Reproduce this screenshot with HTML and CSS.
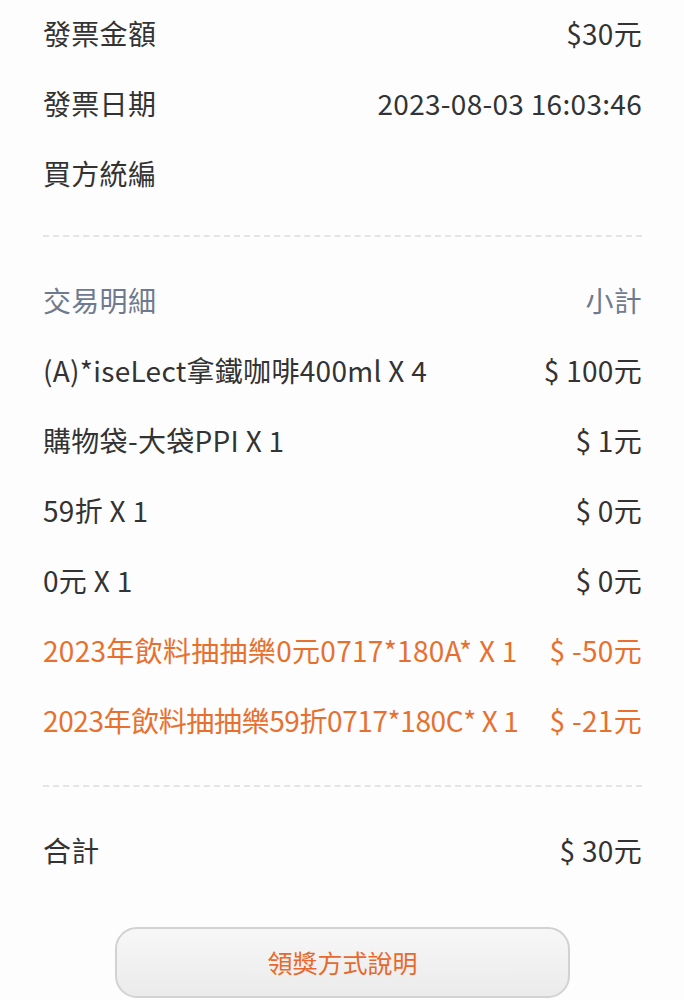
FILE: index.html
```html
<!DOCTYPE html>
<html>

<head>
    <!-- Invoice Detail -->
    <title>發票明細</title>
    <link rel="stylesheet" href="styles.css">
</head>

<body>
    <div class="page">
        <div class="info">
            <div class="row">
                <span>發票金額</span>
                <span>$30元</span>
            </div>
            <div class="row">
                <span>發票日期</span>
                <span>2023-08-03 16:03:46</span>
            </div>
            <div class="row">
                <span>買方統編</span>
                <span></span>
            </div>
        </div>

        <div class="divider first"></div>

        <div class="detail">
            <div class="row head">
                <span>交易明細</span>
                <span>小計</span>
            </div>
            <div class="row">
                <span>(A)*iseLect拿鐵咖啡400ml X 4</span>
                <span>$ 100元</span>
            </div>
            <div class="row">
                <span>購物袋-大袋PPI X 1</span>
                <span>$ 1元</span>
            </div>
            <div class="row">
                <span>59折 X 1</span>
                <span>$ 0元</span>
            </div>
            <div class="row">
                <span>0元 X 1</span>
                <span>$ 0元</span>
            </div>
            <div class="row discount">
                <span>2023年飲料抽抽樂0元0717*180A* X 1</span>
                <span>$ -50元</span>
            </div>
            <div class="row discount">
                <span class="tight">2023年飲料抽抽樂59折0717*180C* X 1</span>
                <span>$ -21元</span>
            </div>
        </div>

        <div class="divider"></div>

        <div class="row total">
            <span>合計</span>
            <span>$ 30元</span>
        </div>

        <div class="button-wrap">
            <button class="button">領獎方式說明</button>
        </div>
    </div>
</body>

</html>
```

FILE: styles.css
```css
* {
    margin: 0px;
    box-sizing: border-box;
}

body {
    background-color: #fdfdfd;
    font-family: "Noto Sans CJK TC", "Noto Sans", sans-serif;
    color: #333333;
}

.page {
    padding: 0px 42px 0px 43px;
}

.row {
    display: flex;
    justify-content: space-between;
    align-items: center;
    height: 70px;
    padding-bottom: 4px;
    font-size: 28px;
    letter-spacing: 0.3px;
    white-space: nowrap;
    gap: 12px;
}

.tight {
    letter-spacing: -0.4px;
}

.head {
    color: #6f7a8e;
}

.discount {
    color: #e8702f;
}

.divider {
    border-top: 2px dashed #e4e4e4;
    margin-top: 28px;
    margin-bottom: 30px;
}

.divider.first {
    margin-top: 25px;
}

.button-wrap {
    display: flex;
    justify-content: center;
    padding-top: 40px;
}

.button {
    width: 455px;
    height: 71px;
    padding-bottom: 3px;
    border: 2px solid #d2d2d2;
    border-radius: 22px;
    background: linear-gradient(#f7f7f7, #ebebeb);
    color: #e8692d;
    font-family: "Noto Sans CJK TC", "Noto Sans", sans-serif;
    font-size: 25px;
}
```
